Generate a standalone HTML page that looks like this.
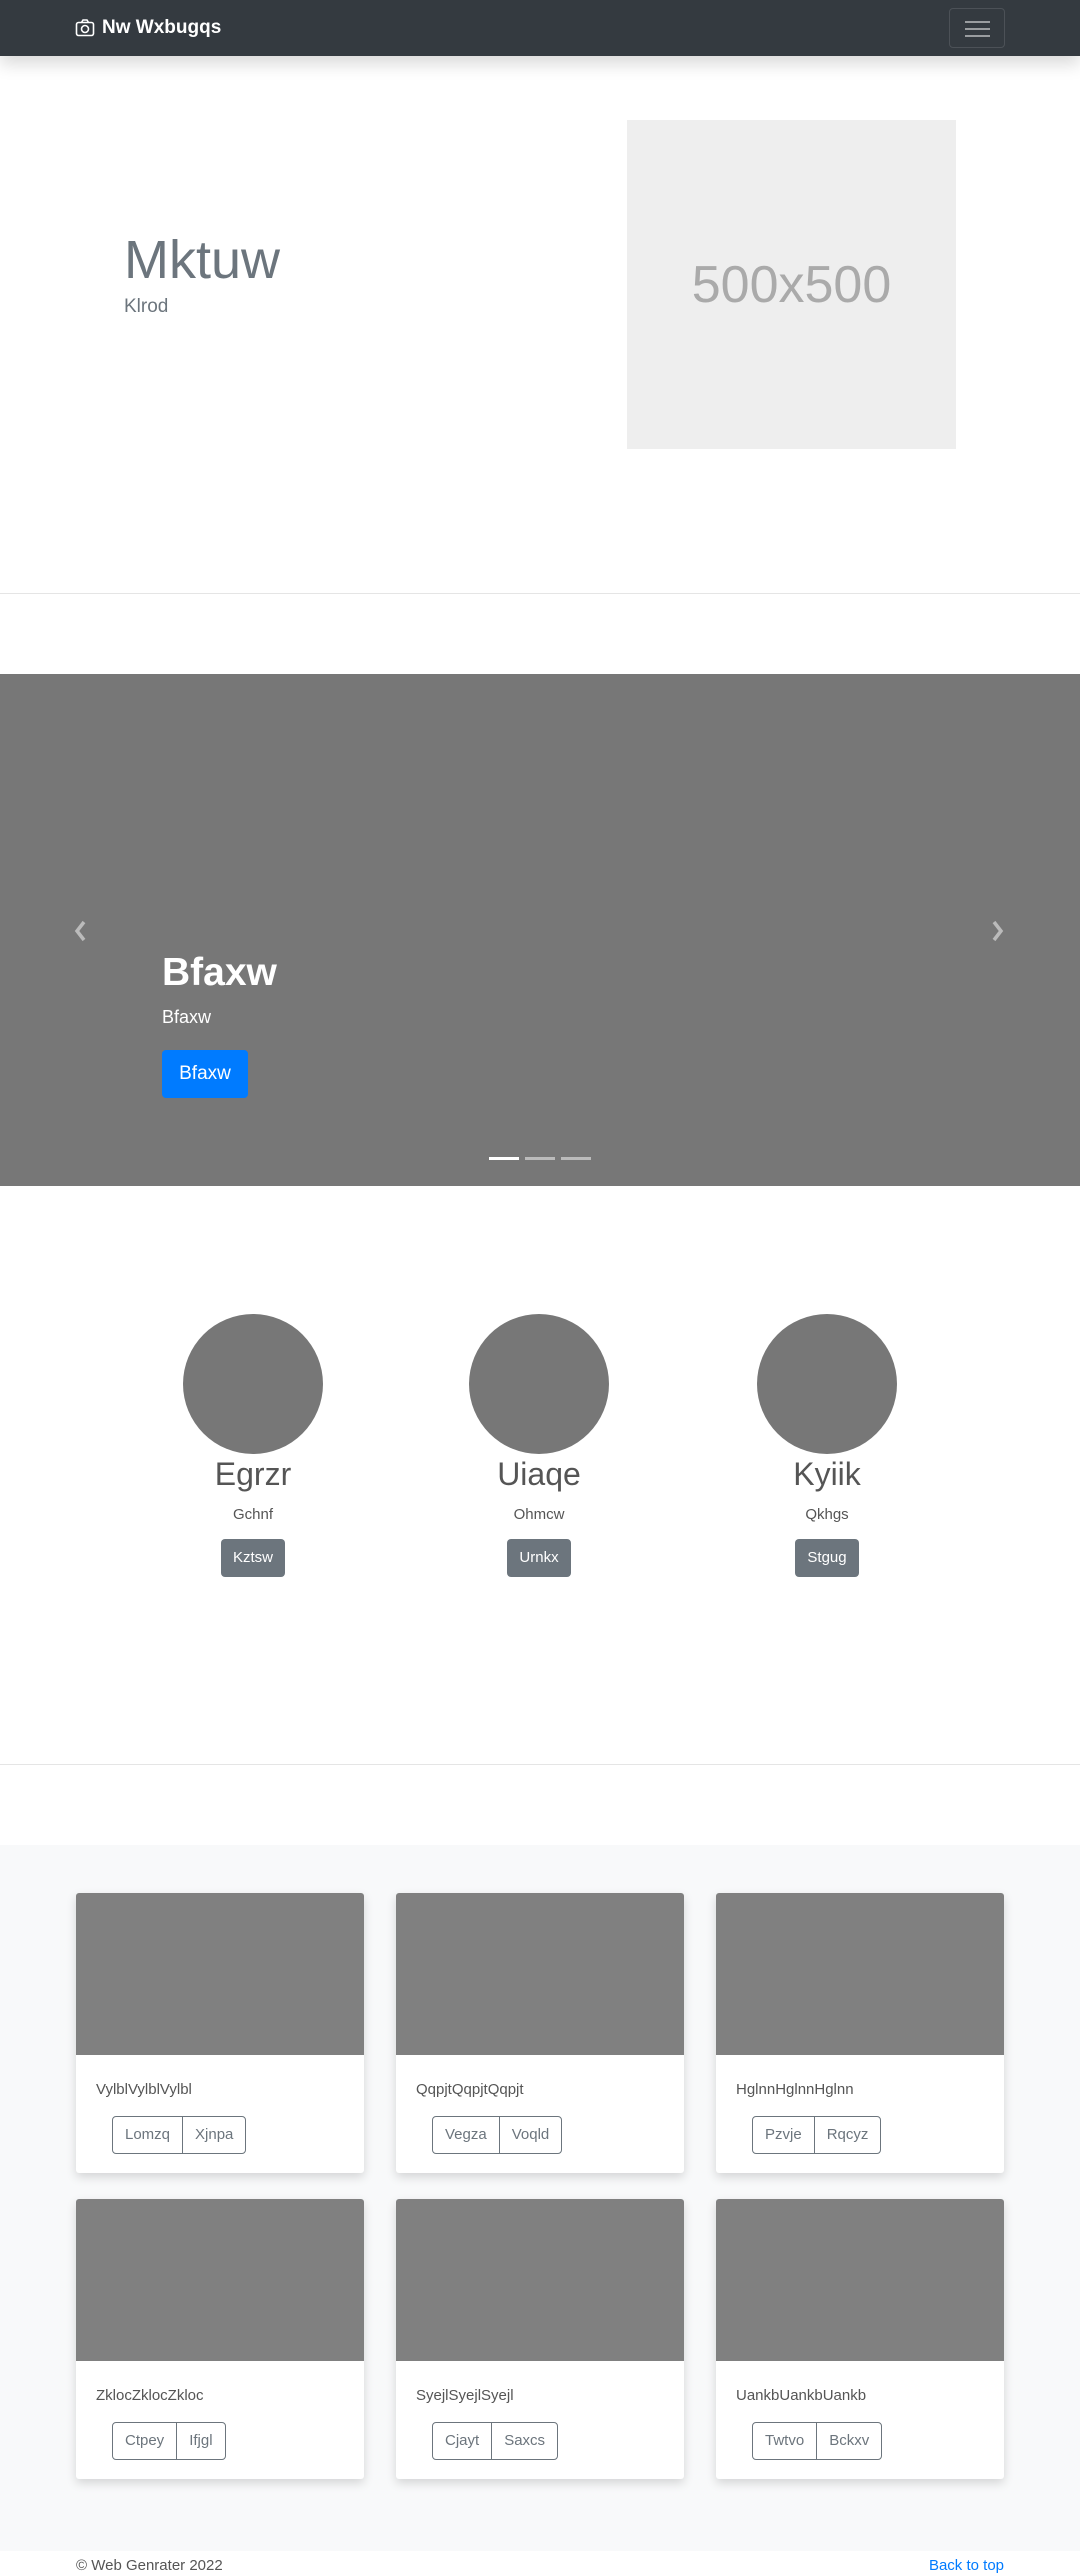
<!DOCTYPE html>
<html><head><meta charset="utf-8">
<style>
*{box-sizing:border-box;margin:0;padding:0}
body{width:1080px;height:2576px;overflow:hidden;font-family:"Liberation Sans",sans-serif;background:#fff;color:#212529;position:relative}
.abs{position:absolute}
.nav{left:0;top:0;width:1080px;height:56px;background:#343a40;box-shadow:0 8px 16px rgba(0,0,0,.15);z-index:2}
.brand{left:75px;top:14px;color:#fff;font-weight:bold;font-size:19px;line-height:28px;display:flex;align-items:center;gap:7px}
.tog{left:949px;top:8px;width:56px;height:40px;border:1px solid rgba(255,255,255,.12);border-radius:4px}
.tog i{position:absolute;left:15px;width:25px;height:2px;background:rgba(255,255,255,.5)}
.ph{left:627px;top:120px;width:329px;height:329px;background:#eee;color:#aaa;font-size:52px;display:flex;align-items:center;justify-content:center}
hr{position:absolute;left:0;width:1080px;border:0;border-top:1px solid rgba(0,0,0,.1)}
.car{left:0;top:674px;width:1080px;height:512px;background:#777}
.circ{width:140px;height:140px;border-radius:50%;background:#777;top:1314px}
.cl{width:300px;text-align:center}
.btn{display:inline-block;border-radius:4px;font-size:15px;line-height:22px}
.card{width:288px;height:280px;background:#fff;box-shadow:0 4px 10px rgba(0,0,0,.15);border-radius:3px;overflow:hidden}
.card .im{height:162px;background:#808080}
.card p{position:absolute;left:20px;top:188px;font-size:15px;color:#555}
.bg{position:absolute;left:36px;top:223px;display:flex;border:1px solid #6c757d;border-radius:4px;height:38px}
.bg span{padding:0 12px;font-size:15px;line-height:36px;color:#6c757d}
.bg span+span{border-left:1px solid #6c757d}
</style></head><body>
<div class="abs nav">
 <div class="abs brand"><svg width="20" height="20" viewBox="0 0 20 20" fill="none" stroke="#fff" stroke-width="1.6"><rect x="1.5" y="4.5" width="17" height="13" rx="2"/><path d="M6.5 4.5l1.5-2.5h4l1.5 2.5"/><circle cx="10" cy="11" r="3.5"/></svg>Nw Wxbugqs</div>
 <div class="abs tog"><i style="top:12px"></i><i style="top:19px"></i><i style="top:26px"></i></div>
</div>
<div class="abs" style="left:124px;top:227px;font-size:54px;font-weight:300;color:#6c757d;line-height:66px">Mktuw</div>
<div class="abs" style="left:124px;top:296px;font-size:19px;font-weight:300;color:#6c757d">Klrod</div>
<div class="abs ph">500x500</div>
<hr style="top:593px">
<div class="abs car">
 <svg class="abs" style="left:73px;top:246px" width="14" height="22" viewBox="0 0 14 22"><path d="M11 2L4 11l7 9" stroke="#bbb" stroke-width="3.5" fill="none"/></svg>
 <svg class="abs" style="left:991px;top:246px" width="14" height="22" viewBox="0 0 14 22"><path d="M3 2l7 9-7 9" stroke="#bbb" stroke-width="3.5" fill="none"/></svg>
 <div class="abs" style="left:162px;top:277px;color:#fff;font-size:39px;font-weight:bold">Bfaxw</div>
 <div class="abs" style="left:162px;top:333px;color:#fff;font-size:18px">Bfaxw</div>
 <div class="abs btn" style="left:162px;top:376px;width:86px;height:48px;background:#007bff;color:#fff;font-size:19px;line-height:48px;text-align:center">Bfaxw</div>
 <div class="abs" style="left:489px;top:483px;width:30px;height:3px;background:#fff"></div>
 <div class="abs" style="left:525px;top:483px;width:30px;height:3px;background:rgba(255,255,255,.5)"></div>
 <div class="abs" style="left:561px;top:483px;width:30px;height:3px;background:rgba(255,255,255,.5)"></div>
</div>
<div class="abs circ" style="left:183px"></div>
<div class="abs circ" style="left:469px"></div>
<div class="abs circ" style="left:757px"></div>
<div class="abs cl" style="left:103px;top:1451px"><div style="font-size:32px;color:#555;line-height:46px">Egrzr</div><div style="font-size:15px;color:#555;margin-top:9px">Gchnf</div><div class="btn" style="margin-top:16px;background:#6c757d;color:#fff;padding:8px 12px">Kztsw</div></div>
<div class="abs cl" style="left:389px;top:1451px"><div style="font-size:32px;color:#555;line-height:46px">Uiaqe</div><div style="font-size:15px;color:#555;margin-top:9px">Ohmcw</div><div class="btn" style="margin-top:16px;background:#6c757d;color:#fff;padding:8px 12px">Urnkx</div></div>
<div class="abs cl" style="left:677px;top:1451px"><div style="font-size:32px;color:#555;line-height:46px">Kyiik</div><div style="font-size:15px;color:#555;margin-top:9px">Qkhgs</div><div class="btn" style="margin-top:16px;background:#6c757d;color:#fff;padding:8px 12px">Stgug</div></div>
<hr style="top:1764px">
<div class="abs" style="left:0;top:1845px;width:1080px;height:706px;background:#f8f9fa"></div>
<div class="abs card" style="left:76px;top:1893px"><div class="im"></div><p>VylblVylblVylbl</p><div class="bg"><span>Lomzq</span><span>Xjnpa</span></div></div>
<div class="abs card" style="left:396px;top:1893px"><div class="im"></div><p>QqpjtQqpjtQqpjt</p><div class="bg"><span>Vegza</span><span>Voqld</span></div></div>
<div class="abs card" style="left:716px;top:1893px"><div class="im"></div><p>HglnnHglnnHglnn</p><div class="bg"><span>Pzvje</span><span>Rqcyz</span></div></div>
<div class="abs card" style="left:76px;top:2199px"><div class="im"></div><p>ZklocZklocZkloc</p><div class="bg"><span>Ctpey</span><span>Ifjgl</span></div></div>
<div class="abs card" style="left:396px;top:2199px"><div class="im"></div><p>SyejlSyejlSyejl</p><div class="bg"><span>Cjayt</span><span>Saxcs</span></div></div>
<div class="abs card" style="left:716px;top:2199px"><div class="im"></div><p>UankbUankbUankb</p><div class="bg"><span>Twtvo</span><span>Bckxv</span></div></div>
<div class="abs" style="left:76px;top:2557px;font-size:15px;color:#555">© Web Genrater 2022</div>
<div class="abs" style="right:76px;top:2557px;font-size:15px;color:#007bff">Back to top</div>
</body></html>
